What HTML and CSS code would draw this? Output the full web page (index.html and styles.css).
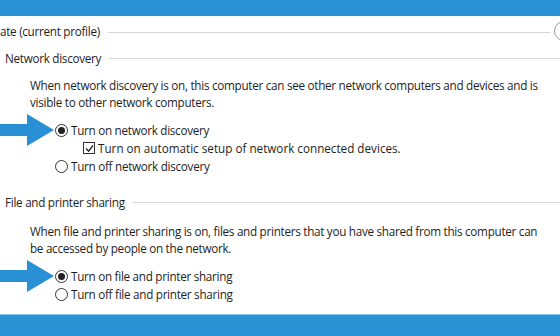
FILE: index.html
```html
<!DOCTYPE html>
<html lang="en">
<head>
    <meta charset="UTF-8">
    <title>Advanced sharing settings</title>
    <link rel="stylesheet" href="styles.css">
</head>
<body>
    <div class="frame">
        <div class="bar"></div>

        <div class="panel">
            <div class="profile-row">
                <span class="profile-title">ate (current profile)</span>
                <span class="rule"></span>
                <span class="expander"></span>
            </div>

            <section class="group">
                <div class="group-head">
                    <span>Network discovery</span>
                    <span class="rule"></span>
                </div>
                <p class="desc">When network discovery is on, this computer can see other network computers and devices and is<br>visible to other network computers.</p>
                <div class="options">
                    <div class="option">
                        <span class="pointer">
                            <svg width="54" height="32" viewBox="0 0 54 32"><path d="M0 10 H27 V0 L54 16 L27 32 V22 H0 Z" fill="#2a90d6"/></svg>
                        </span>
                        <span class="radio checked"></span>
                        <span>Turn on network discovery</span>
                    </div>
                    <div class="option sub">
                        <span class="check">
                            <svg width="9" height="9" viewBox="0 0 9 9"><path d="M1 4.5 L3.6 7.2 L8 1.5" fill="none" stroke="#222" stroke-width="1.3"/></svg>
                        </span>
                        <span>Turn on automatic setup of network connected devices.</span>
                    </div>
                    <div class="option">
                        <span class="pointer"></span>
                        <span class="radio"></span>
                        <span>Turn off network discovery</span>
                    </div>
                </div>
            </section>

            <section class="group sharing">
                <div class="group-head">
                    <span>File and printer sharing</span>
                    <span class="rule"></span>
                </div>
                <p class="desc">When file and printer sharing is on, files and printers that you have shared from this computer can<br>be accessed by people on the network.</p>
                <div class="options">
                    <div class="option">
                        <span class="pointer">
                            <svg width="54" height="32" viewBox="0 0 54 32"><path d="M0 10 H27 V0 L54 16 L27 32 V22 H0 Z" fill="#2a90d6"/></svg>
                        </span>
                        <span class="radio checked"></span>
                        <span>Turn on file and printer sharing</span>
                    </div>
                    <div class="option">
                        <span class="pointer"></span>
                        <span class="radio"></span>
                        <span>Turn off file and printer sharing</span>
                    </div>
                </div>
            </section>
        </div>

        <div class="bar bottom"></div>
    </div>
</body>
</html>
```

FILE: styles.css
```css
* {
    margin: 0;
    padding: 0;
    box-sizing: border-box;
}

body {
    width: 560px;
    height: 336px;
    overflow: hidden;
    background: #fff;
    font-family: 'Open Sans', 'Noto Sans', sans-serif;
    font-size: 11.7px;
    letter-spacing: -0.28px;
    color: #1e1e1e;
}

.frame {
    height: 336px;
    display: flex;
    flex-direction: column;
}

.bar {
    height: 16px;
    background: #2a93d5;
    flex-shrink: 0;
}

.bar.bottom {
    height: 22px;
    margin-top: auto;
    border-top: 1px solid #8cc5ea;
}

.panel {
    padding-top: 6px;
    display: flex;
    flex-direction: column;
}

.profile-row {
    display: flex;
    align-items: center;
    height: 18px;
    white-space: nowrap;
}

.rule {
    flex: 1;
    height: 1px;
    background: #d6d6d6;
    margin-left: 8px;
}

.profile-row .rule {
    margin-top: 3px;
}

.expander {
    width: 20px;
    height: 20px;
    border: 1px solid #9a9a9a;
    border-radius: 50%;
    margin-left: 4px;
    margin-right: -14px;
    flex-shrink: 0;
}

.group {
    padding-left: 5px;
}

.group-head {
    display: flex;
    align-items: center;
    height: 18px;
    margin-top: 9px;
    white-space: nowrap;
}

.sharing .group-head {
    margin-top: 18px;
}

.desc {
    margin-top: 10px;
    padding-left: 25px;
    line-height: 17px;
    white-space: nowrap;
}

.sharing .desc {
    margin-top: 12px;
    line-height: 16.5px;
}

.options {
    margin-top: 10px;
}

.sharing .options {
    margin-top: 11px;
}

.option {
    display: flex;
    align-items: center;
    height: 18px;
    white-space: nowrap;
}

.pointer {
    width: 50px;
    flex-shrink: 0;
    display: flex;
    align-items: center;
    margin-left: -5px;
}

.pointer svg {
    flex-shrink: 0;
}

.radio {
    width: 13px;
    height: 13px;
    border: 1px solid #333;
    border-radius: 50%;
    margin-right: 3px;
    margin-left: 5px;
    display: flex;
    align-items: center;
    justify-content: center;
    flex-shrink: 0;
}

.radio.checked::after {
    content: "";
    width: 7px;
    height: 7px;
    border-radius: 50%;
    background: #222;
}

.option.sub {
    padding-left: 78px;
    letter-spacing: 0;
}

.check {
    width: 12px;
    height: 12px;
    border: 1px solid #333;
    margin-right: 3px;
    display: flex;
    align-items: center;
    justify-content: center;
}
```
